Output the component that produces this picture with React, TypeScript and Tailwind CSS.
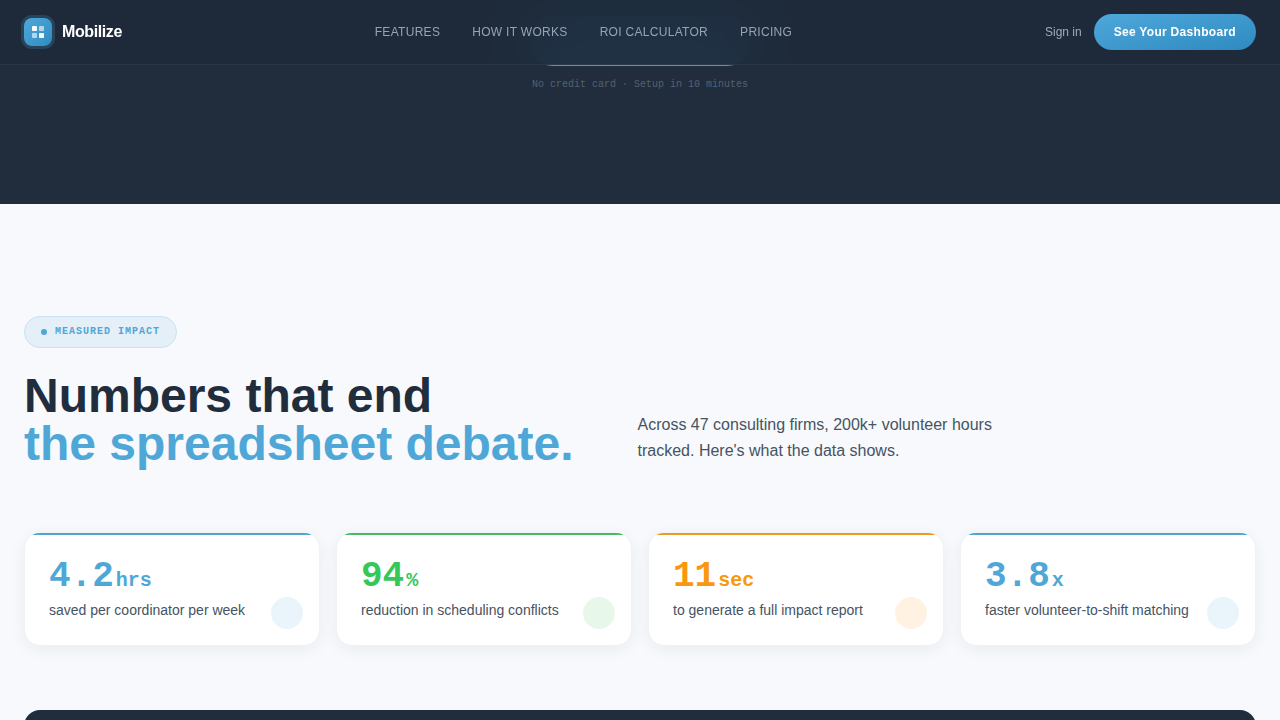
import React from "react";

type Stat = {
  value: string;
  unit: string;
  label: string;
  textClass: string;
  barClass: string;
  dotClass: string;
};

const navLinks = [
  { label: "Features", href: "#features" },
  { label: "How it works", href: "#how-it-works" },
  { label: "ROI Calculator", href: "#roi-calculator" },
  { label: "Pricing", href: "#pricing" },
];

const stats: Stat[] = [
  {
    value: "4.2",
    unit: "hrs",
    label: "saved per coordinator per week",
    textClass: "text-[#4fa7d8]",
    barClass: "bg-[#4fa3cf]",
    dotClass: "bg-[#eaf4fb]",
  },
  {
    value: "94",
    unit: "%",
    label: "reduction in scheduling conflicts",
    textClass: "text-[#34c759]",
    barClass: "bg-[#46b866]",
    dotClass: "bg-[#e7f8eb]",
  },
  {
    value: "11",
    unit: "sec",
    label: "to generate a full impact report",
    textClass: "text-[#f9970f]",
    barClass: "bg-[#ec9a22]",
    dotClass: "bg-[#fff2e2]",
  },
  {
    value: "3.8",
    unit: "x",
    label: "faster volunteer-to-shift matching",
    textClass: "text-[#4fa7d8]",
    barClass: "bg-[#4fa3cf]",
    dotClass: "bg-[#eaf4fb]",
  },
];

const LogoMark: React.FC = () => (
  <span className="flex h-7 w-7 items-center justify-center rounded-lg bg-linear-to-br from-[#4fa8dc] to-[#2f8cc0] ring-3 ring-[#4fa8dc]/20">
    <svg width="12" height="12" viewBox="0 0 12 12" fill="white" aria-hidden="true">
      <rect x="0" y="0" width="5" height="5" rx="0.8" fillOpacity="0.95" />
      <rect x="7" y="0" width="5" height="5" rx="0.8" fillOpacity="0.6" />
      <rect x="0" y="7" width="5" height="5" rx="0.8" fillOpacity="0.6" />
      <rect x="7" y="7" width="5" height="5" rx="0.8" fillOpacity="0.95" />
    </svg>
  </span>
);

const Header: React.FC = () => (
  <header className="fixed inset-x-0 top-0 z-10 border-b border-white/5 bg-[#1e2b3a]/94 backdrop-blur-xl">
    <div className="flex h-16 items-center justify-between px-6">
      <a href="#top" className="flex items-center gap-2.5">
        <LogoMark />
        <span className="text-base font-bold tracking-tight text-white">Mobilize</span>
      </a>

      <nav className="flex items-center gap-8">
        {navLinks.map((link) => (
          <a key={link.href} href={link.href} className="text-xs tracking-wide text-[#98a3b0] uppercase">
            {link.label}
          </a>
        ))}
      </nav>

      <div className="flex items-center gap-3">
        <a href="#sign-in" className="text-xs text-[#a0aab5]">
          Sign in
        </a>
        <button
          type="button"
          className="h-9 rounded-full bg-linear-to-br from-[#4fa8dc] to-[#2d8abf] px-5 text-xs font-bold tracking-wide text-white"
        >
          See Your Dashboard
        </button>
      </div>
    </div>
  </header>
);

const Hero: React.FC = () => (
  <section className="flex flex-col items-center bg-[#212d3c] px-6 pt-4 pb-[110px]">
    <button
      type="button"
      aria-label="See Your Dashboard"
      className="h-[50px] w-56 rounded-full bg-[#3b9bd2]"
    />
    <p className="mt-2.5 font-['Liberation_Mono',monospace] text-[10px] leading-[18px] text-[#566170]">
      No credit card · Setup in 10 minutes
    </p>
  </section>
);

const StatCard: React.FC<{ stat: Stat }> = ({ stat }) => (
  <li className="relative overflow-hidden rounded-2xl border border-[#f0f3f6] bg-white p-6 shadow-[0_4px_16px_rgba(31,45,61,0.06)]">
    <span className={`absolute inset-x-0 top-0 h-0.5 ${stat.barClass}`} />
    <p className={`flex items-baseline gap-0.5 font-['Liberation_Mono',monospace] font-bold ${stat.textClass}`}>
      <span className="text-4xl leading-10">{stat.value}</span>
      <span className="text-xl leading-5">{stat.unit}</span>
    </p>
    <p className="mt-0.5 text-sm leading-[22px] text-[#465362]">{stat.label}</p>
    <span className={`absolute right-4 bottom-4 h-8 w-8 rounded-full ${stat.dotClass}`} />
  </li>
);

const Impact: React.FC = () => (
  <section className="px-6 pt-28">
    <div className="mb-6 inline-flex h-8 items-center gap-2 rounded-full border border-[#cbe2f1] bg-[#e4eff7] px-4 align-top">
      <span className="h-1.5 w-1.5 rounded-full bg-[#4fa7d8]" />
      <span className="font-['Liberation_Mono',monospace] text-[10px] leading-4 font-bold tracking-widest text-[#4fa7d8] uppercase">
        Measured Impact
      </span>
    </div>

    <div className="mb-16 flex items-end gap-16">
      <h2 className="shrink-0 text-5xl leading-12 font-bold text-[#1f2d3d]">
        Numbers that end
        <br />
        <span className="text-[#4fa7d8]">the spreadsheet debate.</span>
      </h2>
      <p className="max-w-96 pb-1 text-base leading-[26px] text-[#465362]">
        Across 47 consulting firms, 200k+ volunteer hours tracked. Here's what the data shows.
      </p>
    </div>

    <ul className="grid grid-cols-4 gap-4">
      {stats.map((stat) => (
        <StatCard key={stat.label} stat={stat} />
      ))}
    </ul>

    <div className="mt-16 h-40 rounded-2xl bg-[#212d3c]" />
  </section>
);

export default function App() {
  return (
    <div id="top" className="min-h-screen bg-[#f7f9fc] font-['Liberation_Sans',Arial,sans-serif]">
      <Header />
      <main>
        <Hero />
        <Impact />
      </main>
    </div>
  );
}
